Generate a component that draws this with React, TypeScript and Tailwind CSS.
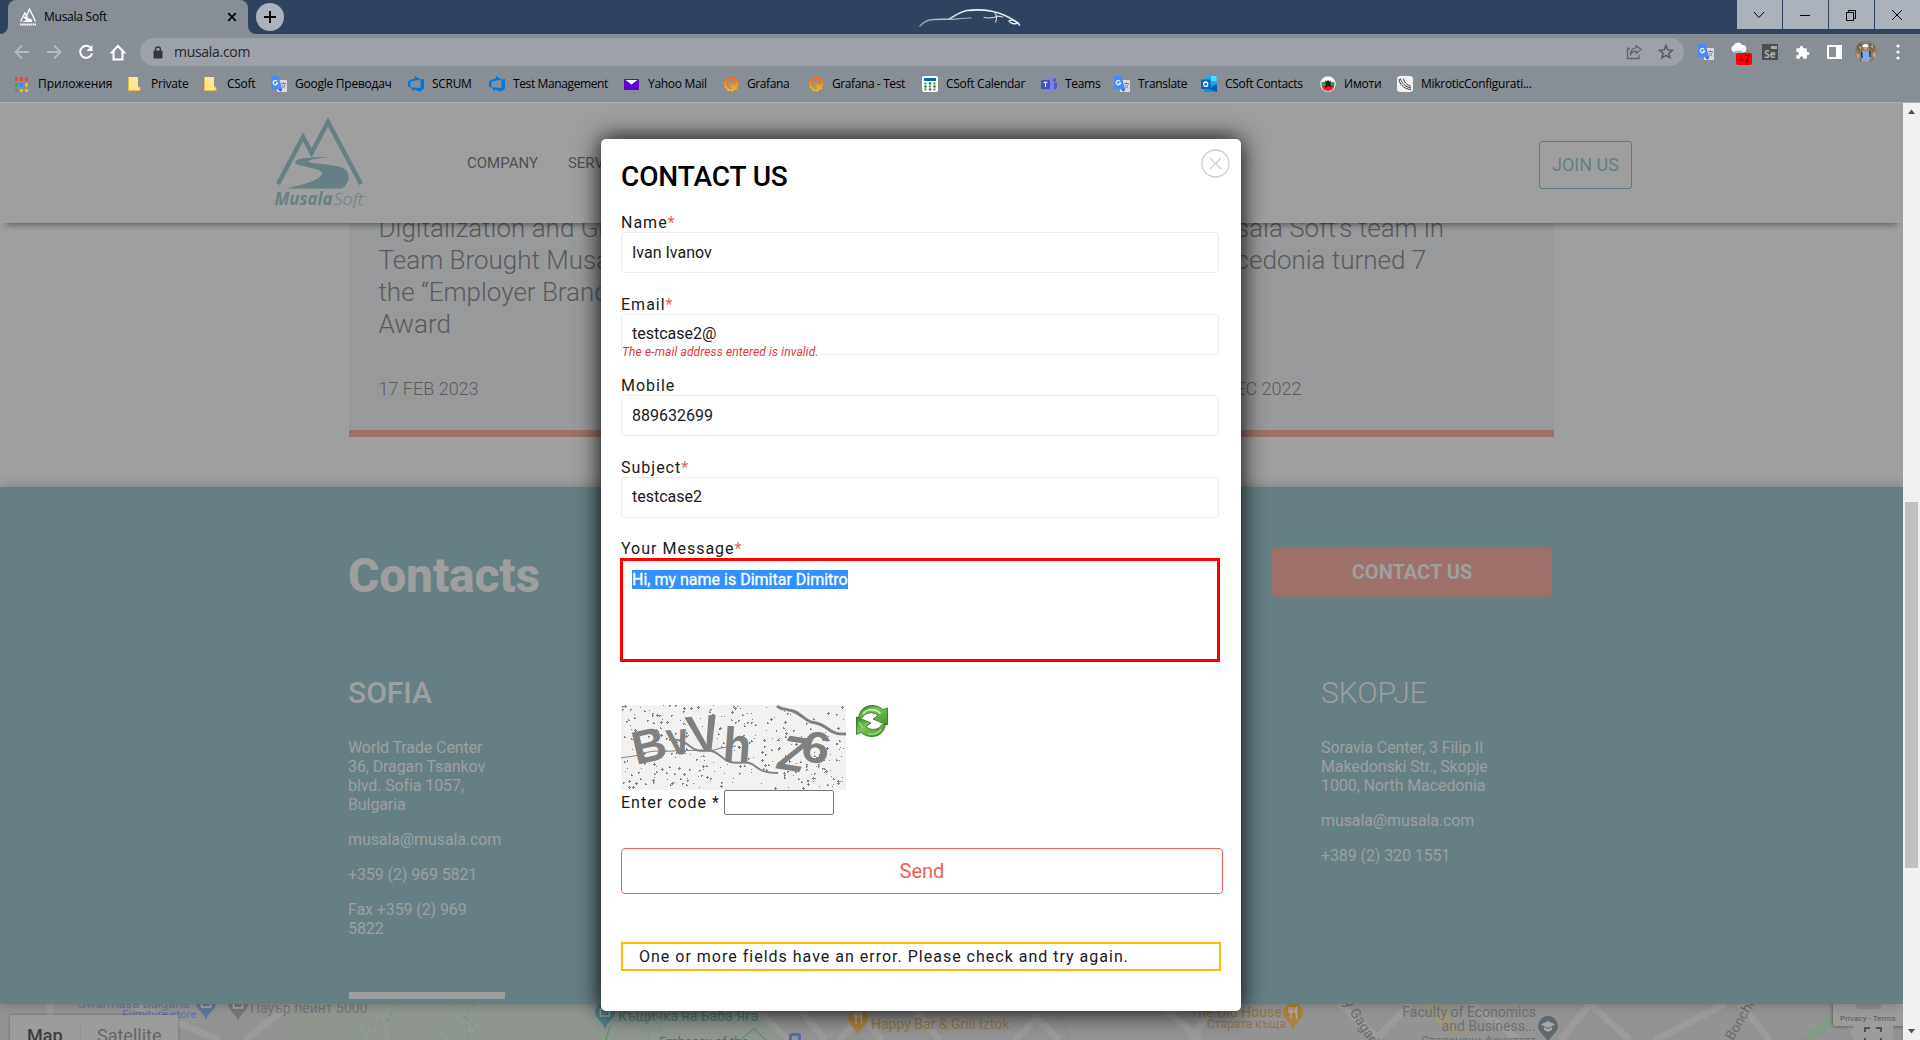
import React from "react";

/* ---------- small icons ---------- */

const AppsIcon = () => (
  <svg width="16" height="16" viewBox="0 0 16 16" shapeRendering="crispEdges">
    {["#f44336", "#f44336", "#f44336", "#34a853", "#2b8cf0", "#fbb606", "#34a853", "#fbb606", "#fbb606"].map((c, i) => (
      <rect key={i} x={1 + (i % 3) * 5} y={1 + Math.floor(i / 3) * 6} width="3" height="4" fill={c} />
    ))}
  </svg>
);

const FolderIcon = () => (
  <svg width="16" height="16" viewBox="0 0 16 16">
    <path d="M1 1h10v10l2 .5V15H1z" fill="#ffe694" />
    <path d="M1.5 1v14M1.5 14.5H13M11 11h2v3.5" fill="none" stroke="#e8bd45" />
  </svg>
);

const GTranslateIcon = () => (
  <svg width="16" height="16" viewBox="0 0 16 16">
    <rect x="6" y="4" width="10" height="12" rx="1" fill="#dcdcdf" />
    <path d="M7 13h4.500l-2 3z" fill="#3a5fd0" />
    <path d="M10 7.500h5M12.500 6.300v1.200M14.200 7.500c-.4 2-1.700 3.500-3 4.500M11 8.800c.6 1.300 1.700 2.500 3.200 3.400" stroke="#78808a" fill="none" strokeWidth=".9" />
    <path d="M1 0h6.500l3.500 13H1a1 1 0 0 1-1-1V1a1 1 0 0 1 1-1z" fill="#4a8af4" />
    <path d="M6 5.200A2.200 2.200 0 1 0 6.500 7H4.600" stroke="#fff" strokeWidth="1.100" fill="none" />
  </svg>
);

const AzureIcon = () => (
  <svg width="16" height="16" viewBox="0 0 16 16">
    <path d="M16 3v9.500L12 15.800 5.900 13.600v2.200L2.500 11.300 12.500 12V3.500zM12.600 3.600 7 0v2.300L1.800 3.900 0 6v4.600l2.500 1.100V5.600z" fill="#0078d7" />
  </svg>
);

const YahooIcon = () => (
  <svg width="16" height="16" viewBox="0 0 16 16">
    <rect x="0" y="3" width="15" height="11" rx="1" fill="#5f01d1" />
    <path d="M1.500 4h12L7.500 8.500z" fill="#fff" />
  </svg>
);

const GrafanaIcon = () => (
  <svg width="16" height="16" viewBox="0 0 16 16">
    <defs>
      <linearGradient id="gr" x1="0" y1="0" x2="0" y2="1">
        <stop offset="0" stopColor="#f05a28" />
        <stop offset="1" stopColor="#fbca0a" />
      </linearGradient>
    </defs>
    <path d="M8.500 0l1.800 1.400 2.700-.2.400 2.300 2.200 1.600-.9 1.900 1.100 2.300-1.800 1.500-.2 2.600-2.600.2L9.500 16l-2.100-1.500-2.600.7-.9-2.400L1.400 12l.5-2.400L.2 7.500l1.700-1.600L1.700 3.300l2.500-.4L5.700.8l2 .8z" fill="url(#gr)" />
    <path d="M12.800 8.300A4.300 4.300 0 1 0 9 12.600" fill="none" stroke="#878e96" strokeWidth="1.300" />
    <path d="M10.900 8.700a2.300 2.300 0 1 0-2.300 2" fill="none" stroke="#878e96" strokeWidth="1" />
  </svg>
);

const CalendarIcon = () => (
  <svg width="16" height="16" viewBox="0 0 16 16">
    <rect width="16" height="16" rx="2" fill="#fff" />
    <rect x="2" y="2" width="12" height="3" fill="#0d6aa8" />
    {[0, 1, 2, 3, 4, 5, 6, 7, 8].map((i) => (
      <circle key={i} cx={3.5 + (i % 3) * 4.5} cy={7.5 + Math.floor(i / 3) * 3} r="1.2" fill={i % 2 ? "#0d6aa8" : "#6bb700"} />
    ))}
  </svg>
);

const TeamsIcon = () => (
  <svg width="16" height="16" viewBox="0 0 16 16">
    <circle cx="13.400" cy="4" r="1.700" fill="#5059c9" />
    <circle cx="9" cy="2.700" r="2.400" fill="#7b83eb" />
    <path d="M11 6.500h5v4.500a2.500 2.500 0 0 1-4 2z" fill="#5059c9" />
    <path d="M5 6h8v5.500a4 4 0 0 1-8 0z" fill="#7b83eb" />
    <rect x="0" y="4" width="9" height="9" rx=".8" fill="#464eb8" />
    <path d="M2.500 6.300h4M4.500 6.300v4.700" stroke="#fff" strokeWidth="1.100" />
  </svg>
);

const OutlookIcon = () => (
  <svg width="16" height="16" viewBox="0 0 16 16">
    <rect x="4" y="0" width="11.500" height="9" rx="1" fill="#28a8ea" />
    <rect x="10" y="0" width="5.500" height="5" fill="#50d9ff" />
    <path d="M3 8h13v7a1 1 0 0 1-1 1H4a1 1 0 0 1-1-1z" fill="#1490df" />
    <path d="M16 8 8 13l8 3z" fill="#0a5ea8" />
    <rect x="0" y="3.500" width="9.500" height="9.500" rx=".8" fill="#0364b8" />
    <ellipse cx="4.700" cy="8.200" rx="2" ry="2.200" stroke="#fff" strokeWidth="1.300" fill="none" />
  </svg>
);

const ImotiIcon = () => (
  <svg width="16" height="16" viewBox="0 0 16 16">
    <circle cx="8" cy="8" r="7.800" fill="#eee" />
    <circle cx="8" cy="8" r="6.500" fill="#fff" />
    <path d="M1.700 6h12.600a6.500 6.500 0 0 1 0 4H1.700a6.500 6.500 0 0 1 0-4z" fill="#2a9c4a" />
    <path d="M1.700 10h12.600a6.500 6.500 0 0 1-12.600 0z" fill="#d8232a" />
    <path d="M5 4.500l2 1 1-2L9 5.500l2-1-.8 3 1.300 3.500L8 10l-3 2 .8-4z" fill="#141414" />
  </svg>
);

const MikroIcon = () => (
  <svg width="16" height="16" viewBox="0 0 16 16">
    <rect width="16" height="16" rx="3" fill="#f1f1f1" />
    <path d="M2 3c.5 5 4 9.500 12 10.700M3.500 2.500C4.500 7 8 10.800 14 12M6.500 2.500C7 6 9.500 9 14 10.300" fill="none" stroke="#2a2a2a" strokeWidth=".9" />
  </svg>
);

/* ---------- browser chrome ---------- */

const bookmarks: { icon: React.ReactNode; text: string; w: string; t: string }[] = [
  { icon: <AppsIcon />, text: "Приложения", w: "w-[113px]", t: "tracking-[-0.1px]" },
  { icon: <FolderIcon />, text: "Private", w: "w-[76px]", t: "tracking-[-0.2px]" },
  { icon: <FolderIcon />, text: "CSoft", w: "w-[68px]", t: "tracking-[-0.3px]" },
  { icon: <GTranslateIcon />, text: "Google Преводач", w: "w-[137px]", t: "tracking-[-0.25px]" },
  { icon: <AzureIcon />, text: "SCRUM", w: "w-[81px]", t: "tracking-[-0.3px]" },
  { icon: <AzureIcon />, text: "Test Management", w: "w-[135px]", t: "tracking-[-0.38px]" },
  { icon: <YahooIcon />, text: "Yahoo Mail", w: "w-[99px]", t: "tracking-[-0.3px]" },
  { icon: <GrafanaIcon />, text: "Grafana", w: "w-[85px]", t: "tracking-[-0.4px]" },
  { icon: <GrafanaIcon />, text: "Grafana - Test", w: "w-[114px]", t: "tracking-[-0.4px]" },
  { icon: <CalendarIcon />, text: "CSoft Calendar", w: "w-[119px]", t: "tracking-[-0.28px]" },
  { icon: <TeamsIcon />, text: "Teams", w: "w-[73px]", t: "tracking-[-0.3px]" },
  { icon: <GTranslateIcon />, text: "Translate", w: "w-[87px]", t: "tracking-[-0.3px]" },
  { icon: <OutlookIcon />, text: "CSoft Contacts", w: "w-[119px]", t: "tracking-[-0.28px]" },
  { icon: <ImotiIcon />, text: "Имоти", w: "w-[77px]", t: "tracking-[-0.2px]" },
  { icon: <MikroIcon />, text: "MikroticConfigurati...", w: "w-[150px]", t: "tracking-[-0.28px]" },
];

const MountainIcon = () => (
  <svg width="18" height="18" viewBox="0 0 18 18" fill="none" stroke="#fff">
    <path d="M1.500 13.500 6 5l1.500 3L10.500 1l6 12.500" strokeWidth="1.300" />
    <path d="M5 8.500h5L8 10c4 .5 6 1.500 5 4H2.500c3-.8 5-1.500 4.500-2.500-1-.8-3-1.500-2-3z" fill="#fff" stroke="none" />
    <path d="M1 16.500h16" strokeWidth="2" strokeDasharray="1.600 .5" />
  </svg>
);

const CarLogo = () => (
  <svg width="104" height="22" viewBox="0 0 104 22" fill="none" strokeLinecap="round">
    <defs>
      <linearGradient id="car" x1="0" x2="1">
        <stop offset="0" stopColor="#8d99a8" />
        <stop offset=".5" stopColor="#f4f6f8" />
        <stop offset="1" stopColor="#d5dae0" />
      </linearGradient>
    </defs>
    <path d="M1 18c5-5 8-6 14-6.500L30 11C37 7 42 3.500 48 2.500c14-1.500 28 .5 38 5 6 3 13 6 14.500 9.500" stroke="url(#car)" strokeWidth="1.700" />
    <path d="M30 11.500c8-.5 15-1.500 22-1.500" stroke="#a9b3bf" strokeWidth="1.200" />
    <path d="M65 9.500c6 1.200 10 .3 15-1.500M76 5c1.500 2.500 2.500 5 .5 9M78 8l6 1" stroke="#d9dde2" strokeWidth="1.100" />
    <path d="M90 13c2-1.500 5-1 9 2-3 1.500-8 .5-9-2z" stroke="#e8ebee" strokeWidth="1.300" />
  </svg>
);

function WindowButton({ children }: { children: React.ReactNode }) {
  return (
    <div className="flex h-[29px] w-[45px] items-center justify-center bg-[#abb2bb] pr-px">
      <svg width="12" height="12" viewBox="0 0 12 12" fill="none" stroke="#000" strokeWidth="1">
        {children}
      </svg>
    </div>
  );
}

function TabStrip() {
  return (
    <div className="flex h-[34px] w-full justify-between bg-[#2f435e]">
      <div className="flex w-[919px] items-end">
        <svg width="8" height="8" viewBox="0 0 8 8"><path d="M8 0v8H0a8 8 0 0 0 8-8z" fill="#878e96" /></svg>
        <div className="flex h-[34px] w-[240px] items-center rounded-t-[8px] bg-[#878e96] pl-[11px]">
          <MountainIcon />
          <span className="ml-[7px] flex-1 text-[12px] leading-4 tracking-[-0.25px] text-black">Musala Soft</span>
          <svg className="mr-[11px]" width="10" height="10" viewBox="0 0 10 10" stroke="#000" strokeWidth="1.700"><path d="M1.200 1.200l7.600 7.600M8.800 1.200L1.200 8.800" /></svg>
        </div>
        <svg width="8" height="8" viewBox="0 0 8 8"><path d="M0 0v8h8a8 8 0 0 1-8-8z" fill="#878e96" /></svg>
        <div className="mb-[3px] flex h-7 w-7 items-center justify-center rounded-full bg-[#abb2bb]">
          <svg width="12" height="12" viewBox="0 0 12 12" stroke="#000" strokeWidth="1.900"><path d="M6 0v12M0 6h12" /></svg>
        </div>
      </div>
      <div className="flex-1 pt-[8px]"><CarLogo /></div>
      <div className="flex gap-px">
        <WindowButton><path d="M1 3l5 5.500L11 3" /></WindowButton>
        <WindowButton><path d="M1 6.500h10" /></WindowButton>
        <WindowButton><path d="M1.500 3.500h7v8h-7zM3.500 3.500v-2h7v8h-2" /></WindowButton>
        <WindowButton><path d="M1 1l10 10M11 1L1 11" /></WindowButton>
      </div>
    </div>
  );
}

function Toolbar() {
  return (
    <div className="flex h-8 w-full items-center bg-[#878e96] pt-1">
      <div className="flex w-[140px] items-center gap-[15.500px] pl-[13px]">
        <svg width="17" height="16" viewBox="0 0 17 16" fill="none" stroke="#b7bbc0" strokeWidth="1.800"><path d="M16 8H3M9 1.500L2.500 8 9 14.500" /></svg>
        <svg width="17" height="16" viewBox="0 0 17 16" fill="none" stroke="#b7bbc0" strokeWidth="1.800"><path d="M1 8h13M8 1.500L14.500 8 8 14.500" /></svg>
        <svg width="16" height="16" viewBox="0 0 16 16" fill="none" stroke="#fff" strokeWidth="2"><path d="M13.300 4.600A6 6 0 1 0 14 9.500" /><path d="M14.500 1v6h-6z" fill="#fff" stroke="none" /></svg>
        <svg width="16" height="17" viewBox="0 0 16 17" fill="none" stroke="#fff" strokeWidth="2"><path d="M8 2L1.800 8.500H3.500V15.500h9V8.500h1.700z" /></svg>
      </div>
      <div className="flex h-7 w-[1544px] items-center rounded-full bg-[#9da1a9] pl-[13px] pr-[10px]">
        <svg width="10" height="13" viewBox="0 0 10 13"><rect x="0.500" y="4.500" width="9" height="8" rx="1" fill="#333539" /><path d="M2.500 5V3.500a2.500 2.500 0 0 1 5 0V5" fill="none" stroke="#333539" strokeWidth="1.300" /></svg>
        <span className="ml-[11px] flex-1 text-[14px] leading-5 tracking-[-0.300px] text-[#25272b]">musala.com</span>
        <svg width="17" height="16" viewBox="0 0 17 16" fill="none" stroke="#62666c" strokeWidth="1.400"><path d="M4 4.500H1.500V14.500H13V11" /><path d="M10 1.500l5 4-5 4V7C7 7 5.500 8.500 4.500 11 4.500 7 6.500 4.200 10 3.900z" strokeLinejoin="round" /></svg>
        <svg className="ml-[15px]" width="16" height="16" viewBox="0 0 16 16" fill="none" stroke="#55595f" strokeWidth="1.500"><path d="M8 1.700l1.800 4.200 4.600.4-3.500 3 1.100 4.500L8 11.400l-4 2.400 1.100-4.500-3.500-3 4.600-.4z" /></svg>
      </div>
      <div className="flex flex-1 items-center pl-[14px]">
        <GTranslateIcon />
        <div className="relative ml-[15px] h-7 w-[18px]">
          <svg className="mt-[2px]" width="18" height="14" viewBox="0 0 18 14"><path d="M5 12.500a4 4 0 0 1 0-7.500 4.500 4.500 0 0 1 8 0 3.700 3.700 0 0 1 1 7.500z" fill="#fff" /><path d="M4 12.500h11l-3-2-6 .5z" fill="#79c5ee" /></svg>
          <span className="absolute left-[7px] top-[15px] flex h-3 w-4 items-center justify-center rounded-[2px] bg-[#f00] text-[10px] leading-3 text-[#300]">+7</span>
        </div>
        <div className="ml-[15px] flex h-4 w-4 shrink-0 flex-col items-end overflow-hidden bg-[#4c4e50]">
          <span className="mr-[1px] mt-[2px] h-[3px] w-[6px] shrink-0 bg-[#a8a8a8]" />
          <span className="w-full text-center text-[10px] font-bold leading-[11px] text-[#b0b0b0]">Se</span>
        </div>
        <svg className="ml-[17px]" width="15" height="15" viewBox="0 0 24 24" fill="#fff"><path d="M20.500 11H19V7a2 2 0 0 0-2-2h-4V3.500a2.500 2.500 0 0 0-5 0V5H4a2 2 0 0 0-2 2v3.800h1.500a2.700 2.700 0 0 1 0 5.400H2V20a2 2 0 0 0 2 2h3.800v-1.500a2.700 2.700 0 0 1 5.400 0V22H17a2 2 0 0 0 2-2v-4h1.500a2.500 2.500 0 0 0 0-5z" /></svg>
        <svg className="ml-[17px]" width="15" height="14" viewBox="0 0 15 14"><path fillRule="evenodd" d="M0 0h15v14H0zM2 2v10h7V2z" fill="#fff" /></svg>
        <svg className="ml-[13px]" width="22" height="22" viewBox="0 0 22 22">
          <defs><clipPath id="av"><circle cx="11" cy="11" r="11" /></clipPath></defs>
          <g clipPath="url(#av)">
            <rect width="22" height="22" fill="#8b7c66" />
            <path d="M0 4l5-3 3 5-4 5zM14 2l6 3-2 6-4-4z" fill="#6c604e" />
            <path d="M1 12l4 2-2 5zM17 13l4-2v8zM4 5l3 1-2 3zM15 5l3-1v4z" fill="#b8aa92" />
            <path d="M8.500 10h4.500l2.500 2 .5 5-1.500 1v3H7v-3l-1-1 .5-5z" fill="#7fa9dc" />
            <path d="M6.500 11l.5 6M14.700 10l.5 6" stroke="#26303f" strokeWidth="1.500" />
            <circle cx="10.500" cy="7" r="2.200" fill="#c79a7c" />
            <path d="M7.500 6a3 3 0 0 1 6 0z" fill="#fff" />
            <path d="M8 20h2v2H8zM12 20h2v2h-2z" fill="#b98467" />
          </g>
        </svg>
        <svg className="ml-[19px]" width="4" height="16" viewBox="0 0 4 16" fill="#fff"><circle cx="2" cy="2" r="1.600" /><circle cx="2" cy="8" r="1.600" /><circle cx="2" cy="14" r="1.600" /></svg>
      </div>
    </div>
  );
}

function Bookmarks() {
  return (
    <div className="flex h-[37px] w-full items-center border-b border-[#a9aeb4] bg-[#878e96] pl-[14px]">
      {bookmarks.map((b, i) => (
        <div key={i} className={`flex shrink-0 items-center gap-[8px] ${b.w}`}>
          {b.icon}
          <span className={`whitespace-nowrap text-[12px] leading-4 text-black ${b.t}`}>{b.text}</span>
        </div>
      ))}
    </div>
  );
}

/* ---------- page behind the dialog ---------- */

const MusalaLogo = () => (
  <svg width="94" height="92" viewBox="0 0 94 92" fill="none">
    <path d="M4 68L29 21l8.500 16L54 6l33 62" stroke="#667f85" strokeWidth="4.400" />
    <path d="M56 41C38 41 22 42 21 46c-.5 5 26 5 27 11 .5 6-17 11.500-36 15.500h56c8-5 9-15.500 2-20-9-5-31-4-35-6.500-1.500-2.500 11-4 21-5z" fill="#667f85" />
    <text x="0.500" y="89" fontFamily="'Noto Sans','Open Sans'" fontStyle="italic" fontWeight="700" fontSize="17" textLength="58" lengthAdjust="spacingAndGlyphs" fill="#667f85">Musala</text>
    <text x="59.500" y="89" fontFamily="'Open Sans'" fontStyle="italic" fontWeight="300" fontSize="17" textLength="30" lengthAdjust="spacingAndGlyphs" fill="#667f85">Soft</text>
  </svg>
);

function Header() {
  return (
    <div className="relative z-10 flex h-[120px] shrink-0 bg-[#9f9f9f] shadow-[0_8px_6px_-6px_rgba(0,0,0,0.4)]">
      <div className="w-[467px] pl-[274px] pt-[13px]"><MusalaLogo /></div>
      <div className="flex flex-1 gap-[30px] pt-[50px] text-[15px] leading-5 text-[#505050]">
        <span>COMPANY</span>
        <span>SERVICES</span>
      </div>
      <div className="mr-[271px] mt-[38px] flex h-[48px] w-[93px] items-center justify-center rounded-[3px] border border-[#5d7b82] pb-[2px] text-[18px] text-[#628087]">
        JOIN US
      </div>
    </div>
  );
}

function NewsCard({ lines, date }: { lines: string[]; date: string }) {
  return (
    <div className="flex h-[214px] flex-col justify-between border-b-[7px] border-[#9b716a] bg-[#98999b] pl-[29.500px] text-[#5a5a5a]">
      <div className="-mt-[11px] text-[26px] font-light leading-8">
        {lines.map((l) => <div key={l} className="whitespace-nowrap">{l}</div>)}
      </div>
      <div className="mb-[31px] text-[18px] font-light leading-5">{date}</div>
    </div>
  );
}

function News() {
  return (
    <div className="h-[264px] shrink-0 overflow-hidden bg-[#9f9f9f]">
      <div className="ml-[349px] grid w-[1205px] grid-cols-3 gap-[26px]">
        <NewsCard lines={["Digitalization and Great", "Team Brought Musala", "the “Employer Brand”", "Award"]} date="17 FEB 2023" />
        <div className="h-[214px] border-b-[7px] border-[#9b716a] bg-[#98999b]" />
        <NewsCard lines={["Musala Soft’s team in", "Macedonia turned 7"]} date="15 DEC 2022" />
      </div>
    </div>
  );
}

function Office({ city, cityClass, lines }: { city: string; cityClass: string; lines: string[][] }) {
  return (
    <div>
      <div className={`text-[30px] leading-9 ${cityClass}`}>{city}</div>
      <div className="mt-[27px] flex flex-col gap-4 text-[16px] leading-[19px] tracking-[-0.1px]">
        {lines.map((group) => (
          <div key={group[0]}>
            {group.map((l) => <div key={l} className="whitespace-nowrap">{l}</div>)}
          </div>
        ))}
      </div>
    </div>
  );
}

function Contacts() {
  return (
    <div className="relative z-10 flex h-[517px] shrink-0 flex-col bg-[#667f85] pl-[349px] text-[#9f9f9f] shadow-[0_0_12px_rgba(0,0,0,0.25)]">
      <div className="flex h-[205px] items-start pt-[60px]">
        <div className="-ml-px w-[924px] pt-[1px] text-[48px] font-extrabold leading-[56px] tracking-[-0.2px]">Contacts</div>
        <div className="flex h-[50px] w-[280px] items-center justify-center rounded-[5px] bg-[#9b716a] text-[20px] font-bold">CONTACT US</div>
      </div>
      <div className="-mt-[17.500px] flex h-[301.500px]">
        <div className="-ml-px w-[973px]">
          <Office
            city="SOFIA"
            cityClass="font-medium"
            lines={[
              ["World Trade Center", "36, Dragan Tsankov", "blvd. Sofia 1057,", "Bulgaria"],
              ["musala@musala.com"],
              ["+359 (2) 969 5821"],
              ["Fax +359 (2) 969", "5822"],
            ]}
          />
        </div>
        <Office
          city="SKOPJE"
          cityClass="font-light"
          lines={[["Soravia Center, 3 Filip II", "Makedonski Str., Skopje", "1000, North Macedonia"], ["musala@musala.com"], ["+389 (2) 320 1551"]]}
        />
      </div>
      <div className="mt-[16px] h-[7px] w-[156px] bg-[#9f9f9f]" />
    </div>
  );
}

function Pin({ color, className, glyph }: { color: string; className: string; glyph: "bag" | "fork" | "cap" }) {
  return (
    <svg className={`absolute ${className}`} width="20" height="28" viewBox="0 0 20 28">
      <path d="M10 28C9 20 0 17 0 10a10 10 0 0 1 20 0c0 7-9 10-10 18z" fill={color} />
      {glyph === "bag" && <path d="M5.500 7h9v7h-9zM8 7V5h4v2" fill="none" stroke="#a9a9a9" strokeWidth="1.600" />}
      {glyph === "fork" && <path d="M6 4v5h4V4M8 4v12M13.500 16V4.500c-2 1-2 5 0 6" fill="none" stroke="#b4aa9a" strokeWidth="1.400" />}
      {glyph === "cap" && <path d="M10 5l7 3.500-7 3.500-7-3.500zM6 11v3l4 2 4-2v-3l-4 2z" fill="#a9a9a9" />}
    </svg>
  );
}

function MapStrip() {
  return (
    <div className="relative h-9 shrink-0 overflow-hidden bg-[#939393] text-[#666]">
      <svg className="absolute left-0 top-0" width="1903" height="36" viewBox="0 0 1903 36" fill="none">
        <path d="M305 0H755L790 36H275z" fill="#8f978f" />
        <path d="M130 0l90 36M245 36L292 0M50 0v12M760 8l28 28M800 5l25 31M840 36l20-25 22 25M910 0l30 36M1015 36l22-22 22 22M1160 0l40 36M1190 36l26-36M1340 0l40 36M1375 36L1410 0M1470 0l50 36M1560 36l30-36M1590 0l40 36M1655 36l70-36M1740 0l30 36" stroke="#9c9c9c" strokeWidth="7" />
        <path d="M1420 0h26l10 24 16 2 5 6-30-3z" fill="#9b9580" />
        <path d="M1800 36l28-24h16l-30 24z" fill="#819a86" />
        <path d="M1840 10l20 26" stroke="#9c9c9c" strokeWidth="6" />
        <path d="M395 0l-5 15-22 8-8 13M388 15l4 21M455 0l10 12 20 24M475 0l-10 12-24 24M465 12l3 24M648 0v36M655 15l10 21M1060 12l10 24" stroke="#6f9677" strokeWidth="1" strokeDasharray="5 3" />
        <path d="M610 22l-4 14M740 36l14-11 12 11" stroke="#649272" strokeWidth="1.500" />
      </svg>
      <div className="absolute left-0 top-0 h-9 w-[1903px] font-['Roboto']">
        <div className="absolute left-[78px] top-[-8px] whitespace-nowrap text-[13px] leading-4 text-[#6d7894]">Swarmasa Bulgaria</div>
        <div className="absolute left-[122px] top-[2px] whitespace-nowrap text-[11.500px] leading-4 text-[#5c73a5]">Furniture store</div>
        <Pin glyph="bag" color="#64759a" className="left-[196px] top-[-11px]" />
        <Pin glyph="bag" color="#737878" className="left-[228px] top-[-10px]" />
        <div className="absolute left-[250px] top-[-4px] whitespace-nowrap text-[14px] leading-4 text-[#70767a]">Пауър пейнт 5000</div>
        <Pin glyph="bag" color="#4f8288" className="left-[595px] top-[-2px]" />
        <div className="absolute left-[618px] top-[4px] whitespace-nowrap text-[14px] leading-4 text-[#4e7b80]">Къщичка на Баба Яга</div>
        <div className="absolute left-[659px] top-[30px] whitespace-nowrap text-[13px] leading-4 text-[#666]">Embassy of the</div>
        <div className="absolute left-[789px] top-[29px] h-3 w-3 rounded-[3px] border-[3px] border-[#526da5]" />
        <Pin glyph="fork" color="#a8803f" className="left-[848px] top-[4px]" />
        <div className="absolute left-[871px] top-[12px] whitespace-nowrap text-[14px] leading-4 text-[#92744a]">Happy Bar &amp; Grill Iztok</div>
        <div className="absolute left-[1190px] top-[0px] w-[91px] whitespace-nowrap text-right text-[14px] leading-4 text-[#92744a]">The Old House</div>
        <div className="absolute left-[1207px] top-[12px] whitespace-nowrap text-[12px] leading-4 text-[#92744a]">Старата къща</div>
        <Pin glyph="fork" color="#a8803f" className="left-[1283px] top-[-1px]" />
        <div className="absolute left-[1332px] top-[12px] rotate-[57deg] whitespace-nowrap text-[14px] leading-4 text-[#6b6b6b]">iy Gagarin</div>
        <div className="absolute left-[1380px] top-[1px] w-[156px] whitespace-nowrap text-right text-[14px] leading-[14px] text-[#6b7074]">Faculty of Economics<br />and Business...<br /><span className="text-[12px]">Стопански факултет</span></div>
        <Pin glyph="cap" color="#5f686e" className="left-[1538px] top-[12px]" />
        <div className="absolute left-[1704px] top-[10px] rotate-[-60deg] whitespace-nowrap text-[14px] leading-4 text-[#6b6b6b]">di Bonchev</div>
        <div className="absolute left-[10px] top-[11px] flex h-[40px] items-center bg-[#9c9c9c] text-[18px] shadow-[0_0_3px_rgba(0,0,0,0.3)]">
          <span className="w-[70px] pl-[17px] font-medium text-[#3c3c3c]">Map</span>
          <span className="w-[98px] border-l border-[#929292] pl-[16px] text-[#666]">Satellite</span>
        </div>
        <div className="absolute left-[1833px] top-[-10px] h-[32px] w-[70px] rounded-l-[2px] bg-[#9c9c9c] pl-[7px] pt-[20px] text-[8px] leading-[9px] tracking-[0.1px] text-[#555] shadow-[0_0_4px_rgba(0,0,0,0.5)]">Privacy - Terms</div>
        <div className="absolute left-[1855px] top-0 h-[5px] w-[27px] rounded-b-full bg-[#8d8d8f]" />
        <svg className="absolute left-[1853px] top-[22px]" width="40" height="14" viewBox="0 0 40 14"><path d="M0 0h40v14H0z" fill="#9c9c9c" /><path d="M12 6V2h5M23 2h5v4M12 12v2M28 12v2" fill="none" stroke="#505050" strokeWidth="2" /></svg>
      </div>
    </div>
  );
}

function Scrollbar() {
  return (
    <div className="flex w-[17px] flex-col items-center bg-[#f1f1f1]">
      <svg width="17" height="17" viewBox="0 0 17 17"><path d="M5 11h7L8.500 6.500z" fill="#505050" /></svg>
      <div className="mt-[382px] h-[366px] w-[13px] bg-[#c1c1c1]" />
      <svg className="mt-auto" width="17" height="17" viewBox="0 0 17 17"><path d="M5 6h7l-3.500 4.500z" fill="#505050" /></svg>
    </div>
  );
}

/* ---------- dialog ---------- */

function Field({ label, value, required, error }: { label: string; value: string; required?: boolean; error?: string }) {
  return (
    <div className="relative mb-[20.500px]">
      <div className="h-5 leading-[21px] tracking-[1px]">{label}{required && <span className="text-[#f16051]">*</span>}</div>
      <div className="flex h-[41px] w-[598px] items-center rounded-[4px] border border-[#ececec] pl-[10px] text-[#1a1a1a]">{value}</div>
      {error && <div className="absolute left-[1px] top-[51px] bg-white text-[12px] italic leading-[14px] tracking-[0.13px] text-[#e2363c]">{error}</div>}
    </div>
  );
}

function rng(seed: number) {
  let s = seed;
  return () => {
    s = (s * 16807) % 2147483647;
    return s / 2147483647;
  };
}

const speckles = (() => {
  const r = rng(4211);
  let d = "";
  for (let i = 0; i < 330; i++) {
    const x = Math.floor(r() * 223);
    const y = Math.floor(r() * 83);
    const k = r();
    if (k < 0.3) d += `M${x} ${y}h1v1h-1z`;
    else if (k < 0.55) d += `M${x} ${y}h2v1h-1v1h-1z`;
    else if (k < 0.8) d += `M${x} ${y}h1v1h1v1h-2z`;
    else d += `M${x} ${y + 1}h3v1h-3zM${x + 1} ${y}h1v3h-1z`;
  }
  return d;
})();

const Captcha = () => (
  <svg width="225" height="85" viewBox="0 0 225 85">
    <rect width="225" height="85" fill="#f2f2f2" />
    <path d={speckles} fill="#808080" shapeRendering="crispEdges" />
    <g fill="#808080" fontFamily="'Liberation Sans'" fontWeight="bold">
      <text transform="translate(15 60) rotate(-13)" fontSize="47" textLength="34" lengthAdjust="spacingAndGlyphs">B</text>
      <text transform="translate(50 50) rotate(-4) skewX(10)" fontSize="47" textLength="21" lengthAdjust="spacingAndGlyphs">v</text>
      <text transform="translate(71 47) rotate(-5) skewX(8)" fontSize="51" textLength="32" lengthAdjust="spacingAndGlyphs">V</text>
      <text transform="translate(101 56) rotate(4)" fontSize="49" textLength="28" lengthAdjust="spacingAndGlyphs">h</text>
      <text transform="translate(153 63) rotate(9) skewX(-12)" fontSize="50" textLength="27" lengthAdjust="spacingAndGlyphs">Z</text>
      <text transform="translate(178 54) rotate(13)" fontSize="44" textLength="28" lengthAdjust="spacingAndGlyphs">6</text>
    </g>
    <g fill="none" stroke="#808080">
      <path d="M0 53c10-2 12-1 20-4 16-5 22-2 32-3 16-2 30 1 41-1 8-3 16-3 22-4" strokeWidth="1" />
      <path d="M48 35c8-2 16 2 22 7 8 6 12 3 21 4 10 3 10 9 18 11 8 2 15-1 22 2 7 4 8 9 26 9" strokeWidth="2" />
      <path d="M156 1c4 4 10 3 16 5 8 3 12 9 18 11 10 1 14 5 20 9 5 3 8 3 15 3" strokeWidth="3" />
    </g>
  </svg>
);

const RefreshIcon = () => (
  <svg width="32" height="32" viewBox="0 0 32 32">
    <defs>
      <linearGradient id="rf" x1="0" y1="0" x2="1" y2="1">
        <stop offset="0" stopColor="#2f8020" />
        <stop offset=".4" stopColor="#7cc45a" />
        <stop offset="1" stopColor="#3e9426" />
      </linearGradient>
    </defs>
    <path d="M2.500 13C3.500 5 9 .5 16 .5c5 0 8.500 1.800 11 4.200L31.500 3v17L17 14l5-3.500C17 5.500 8.500 8 6.500 12.500z" fill="url(#rf)" stroke="#2b7a1c" strokeWidth=".9" />
    <path d="M29.500 19c-1 8-6.500 12.500-13.500 12.500-5 0-8.500-1.800-11-4.200L.5 29.500V12L15 18l-5 3.500C15 26.500 23.500 24.500 25.500 20z" fill="url(#rf)" stroke="#2b7a1c" strokeWidth=".9" />
    <path d="M7 9C11 3.500 19 3 24.500 8.500" fill="none" stroke="#c9ecb6" strokeWidth="1.600" />
    <path d="M3 17l3.500 6M12 28.500c5 1.500 10-.5 13-4" fill="none" stroke="#a5dc8a" strokeWidth="1.400" />
  </svg>
);

function ContactDialog() {
  return (
    <div className="absolute left-[601px] top-[139px] z-20 h-[872px] w-[640px] rounded-[5px] bg-white pl-[20px] pt-[22px] font-['Roboto'] text-[16px] text-[#1a1a1a] shadow-[0_0_25px_#000]">
      <svg className="absolute right-[11px] top-[10px]" width="29" height="29" viewBox="0 0 29 29" fill="none" stroke="#cfcfcf">
        <circle cx="14.500" cy="14.500" r="13.500" strokeWidth="1.300" />
        <path d="M9 9l11 11M20 9L9 20" strokeWidth="1.200" />
      </svg>
      <h2 className="mb-[19px] h-8 text-[28px] font-medium leading-8 tracking-[-0.1px] text-black">CONTACT US</h2>
      <Field label="Name" value="Ivan Ivanov" required />
      <Field label="Email" value="testcase2@" required error="The e-mail address entered is invalid." />
      <Field label="Mobile" value="889632699" />
      <Field label="Subject" value="testcase2" required />
      <div className="h-5 leading-[21px] tracking-[1px]">Your Message<span className="text-[#f16051]">*</span></div>
      <div className="-ml-px h-[104px] w-[600px] border-[3px] border-[#f00] pl-[9px] pt-[9px] leading-[19px]">
        <span className="inline-block bg-[#3390ff] text-white [-webkit-text-stroke:0.3px_white]">Hi, my name is Dimitar Dimitro</span>
      </div>
      <div className="mt-[43px] flex gap-[10px]">
        <Captcha />
        <RefreshIcon />
      </div>
      <div className="flex h-[25px] items-center gap-[4.500px] tracking-[1px]">
        Enter code *
        <span className="h-[25px] w-[110px] rounded-[2px] border border-[#767676] bg-white" />
      </div>
      <div className="mt-[33px] flex h-[46px] w-[602px] items-center justify-center rounded-[4px] border border-[#f16051] text-[20px] text-[#f16051]">Send</div>
      <div className="mt-[48px] flex h-[29px] w-[600px] items-center border-2 border-[#ffb900] pl-[16px] tracking-[1px]">
        One or more fields have an error. Please check and try again.
      </div>
    </div>
  );
}

export default function App() {
  return (
    <div className="relative flex h-[1040px] w-[1920px] flex-col overflow-hidden bg-[#9f9f9f] font-['Open_Sans','Noto_Sans',sans-serif]">
      <TabStrip />
      <Toolbar />
      <Bookmarks />
      <div className="flex h-[937px]">
        <div className="flex w-[1903px] flex-col overflow-hidden font-['Roboto',sans-serif]">
          <Header />
          <News />
          <Contacts />
          <MapStrip />
        </div>
        <Scrollbar />
      </div>
      <ContactDialog />
    </div>
  );
}
